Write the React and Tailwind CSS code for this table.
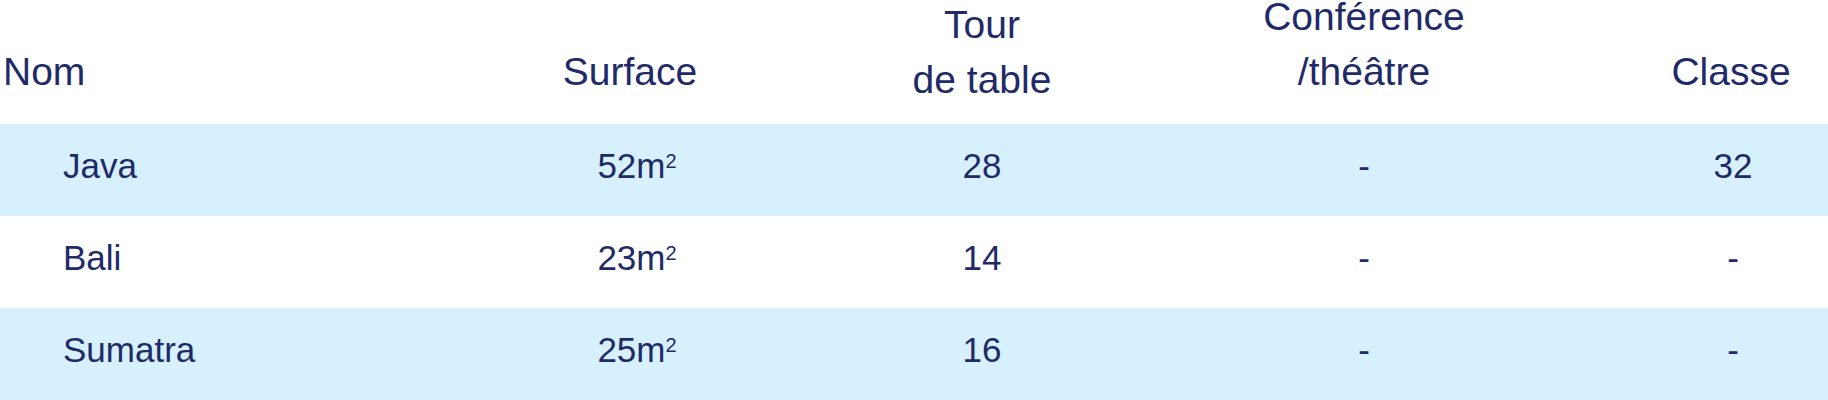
import React from "react";

const rows = [
  { nom: "Java", surface: "52", tour: "28", conf: "-", classe: "32", shaded: true },
  { nom: "Bali", surface: "23", tour: "14", conf: "-", classe: "-", shaded: false },
  { nom: "Sumatra", surface: "25", tour: "16", conf: "-", classe: "-", shaded: true },
];

const cols = "grid grid-cols-[390px_480px_224px_540px_194px]";

const App = () => {
  return (
    <div
      className="w-[1828px] h-[400px] bg-white text-[#1f2a68] overflow-hidden"
      style={{ fontFamily: "'Liberation Sans', Arial, sans-serif" }}
    >
      <div className={`${cols} h-[124px] text-[39px] leading-[34px]`}>
        <div className="flex items-end pb-[35px] pl-[3px]">Nom</div>
        <div className="flex items-end justify-center pb-[35px]">Surface</div>
        <div className="flex flex-col items-center justify-end gap-[21px] pb-[27px]">
          <span>Tour</span>
          <span>de table</span>
        </div>
        <div className="flex flex-col items-center justify-end gap-[21px] pb-[35px]">
          <span>Conférence</span>
          <span>/théâtre</span>
        </div>
        <div className="flex items-end justify-center pb-[35px]">Classe</div>
      </div>

      {rows.map((r) => (
        <div
          key={r.nom}
          className={`${cols} h-[92px] text-[35px] leading-[40px] ${r.shaded ? "bg-[#d6f1fd]" : "bg-white"}`}
        >
          <div className="flex items-center pb-[8px] pl-[63px]">{r.nom}</div>
          <div className="flex items-center justify-center pb-[8px] pl-[14px]">
            <span>
              {r.surface}m<sup className="text-[20px]">2</sup>
            </span>
          </div>
          <div className="flex items-center justify-center pb-[8px]">{r.tour}</div>
          <div className="flex items-center justify-center pb-[8px]">{r.conf}</div>
          <div className="flex items-center justify-center pb-[8px] pl-[4px]">{r.classe}</div>
        </div>
      ))}
    </div>
  );
};

export default App;
